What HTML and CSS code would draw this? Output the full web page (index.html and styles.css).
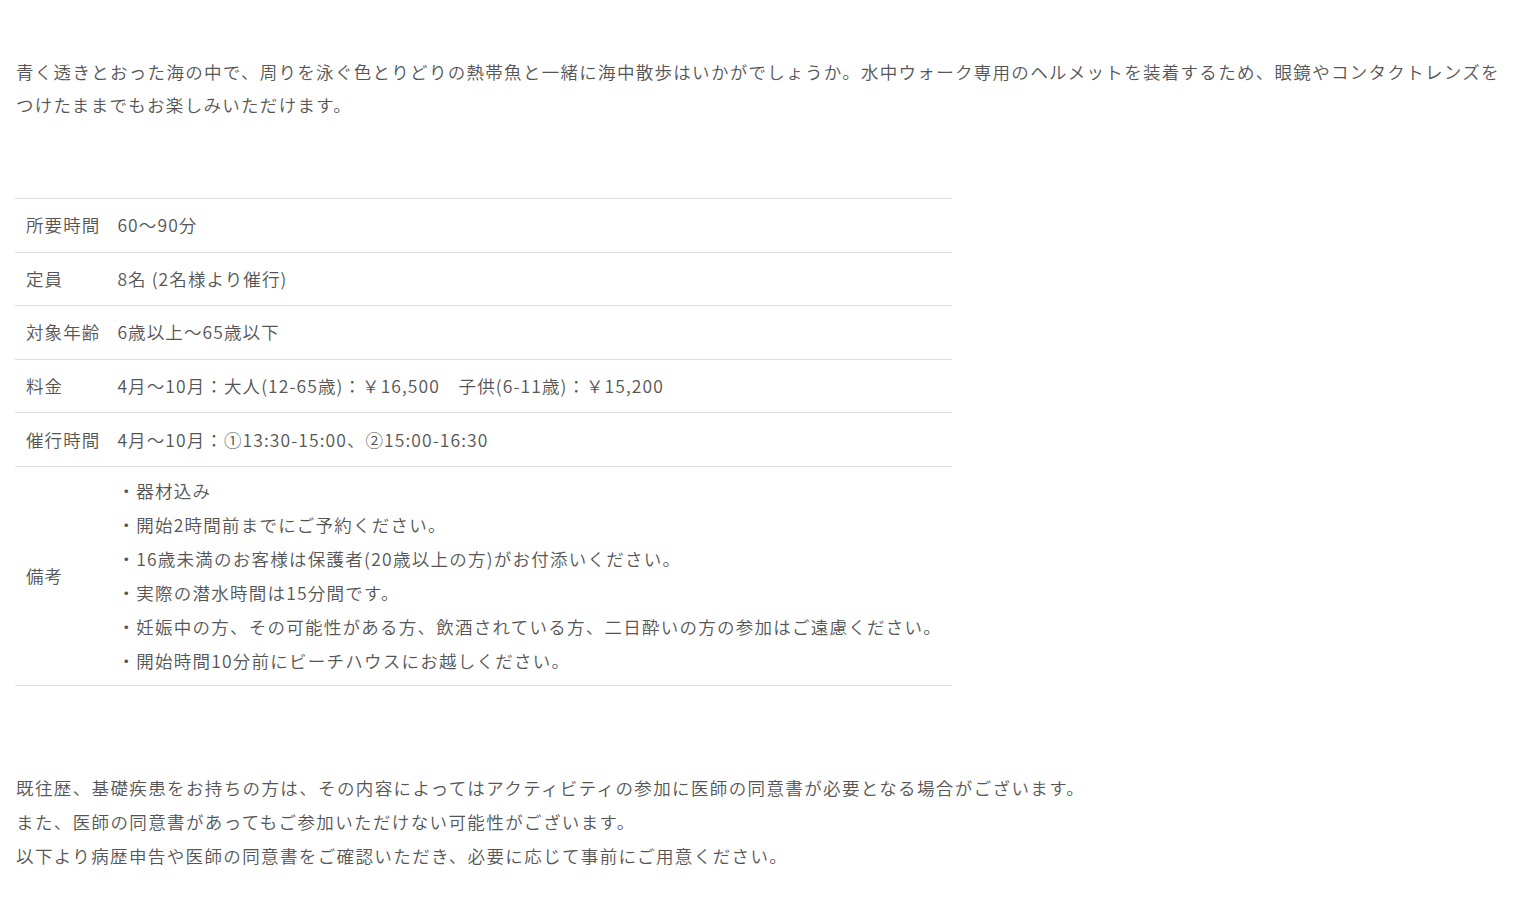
FILE: index.html
```html
<!DOCTYPE html>
<html lang="ja">
<head>
    <meta charset="UTF-8">
    <meta name="viewport" content="width=device-width, initial-scale=1.0">
    <title>水中ウォーク</title>
    <link rel="stylesheet" href="styles.css">
</head>
<body>
    <div class="page">
        <p class="lead">青く透きとおった海の中で、周りを泳ぐ色とりどりの熱帯魚と一緒に海中散歩はいかがでしょうか。水中ウォーク専用のヘルメットを装着するため、眼鏡やコンタクトレンズをつけたままでもお楽しみいただけます。</p>

        <table class="info-table">
            <tr>
                <th>所要時間</th>
                <td>60〜90分</td>
            </tr>
            <tr>
                <th>定員</th>
                <td>8名 (2名様より催行)</td>
            </tr>
            <tr>
                <th>対象年齢</th>
                <td>6歳以上〜65歳以下</td>
            </tr>
            <tr>
                <th>料金</th>
                <td>4月〜10月：大人(12-65歳)：￥16,500　子供(6-11歳)：￥15,200</td>
            </tr>
            <tr>
                <th>催行時間</th>
                <td>4月〜10月：①13:30-15:00、②15:00-16:30</td>
            </tr>
            <tr class="notes">
                <th>備考</th>
                <td>
                    ・器材込み<br>
                    ・開始2時間前までにご予約ください。<br>
                    ・16歳未満のお客様は保護者(20歳以上の方)がお付添いください。<br>
                    ・実際の潜水時間は15分間です。<br>
                    ・妊娠中の方、その可能性がある方、飲酒されている方、二日酔いの方の参加はご遠慮ください。<br>
                    ・開始時間10分前にビーチハウスにお越しください。
                </td>
            </tr>
        </table>

        <p class="notice">既往歴、基礎疾患をお持ちの方は、その内容によってはアクティビティの参加に医師の同意書が必要となる場合がございます。<br>
        また、医師の同意書があってもご参加いただけない可能性がございます。<br>
        以下より病歴申告や医師の同意書をご確認いただき、必要に応じて事前にご用意ください。</p>
    </div>
</body>
</html>
```

FILE: styles.css
```css
body {
    margin: 0;
    padding: 0;
    background-color: #fff;
    color: #555;
    font-family: "Noto Sans CJK JP", "Noto Sans", sans-serif;
    font-weight: 350;
    font-size: 17.5px;
}

.page {
    padding: 55px 8px 40px 16px;
}

.lead {
    margin: 0;
    line-height: 33px;
    letter-spacing: 1.3px;
}

.info-table {
    width: 937px;
    margin: 77px 0 0 -1px;
    border-collapse: collapse;
    letter-spacing: 1.1px;
}

.info-table th,
.info-table td {
    border-top: 1px solid #ddd;
    border-bottom: 1px solid #ddd;
    padding: 9.3px 10px;
    line-height: 34px;
    text-align: left;
    font-weight: 350;
    vertical-align: middle;
}

.info-table th {
    white-space: nowrap;
    width: 74px;
    padding-left: 11px;
    padding-right: 7px;
}

.info-table .notes td {
    padding-top: 7px;
    padding-bottom: 7px;
    padding-right: 0;
    letter-spacing: 1.25px;
    white-space: nowrap;
}

.notice {
    margin: 85px 0 0 0;
    line-height: 34px;
    letter-spacing: 1.38px;
}
```
